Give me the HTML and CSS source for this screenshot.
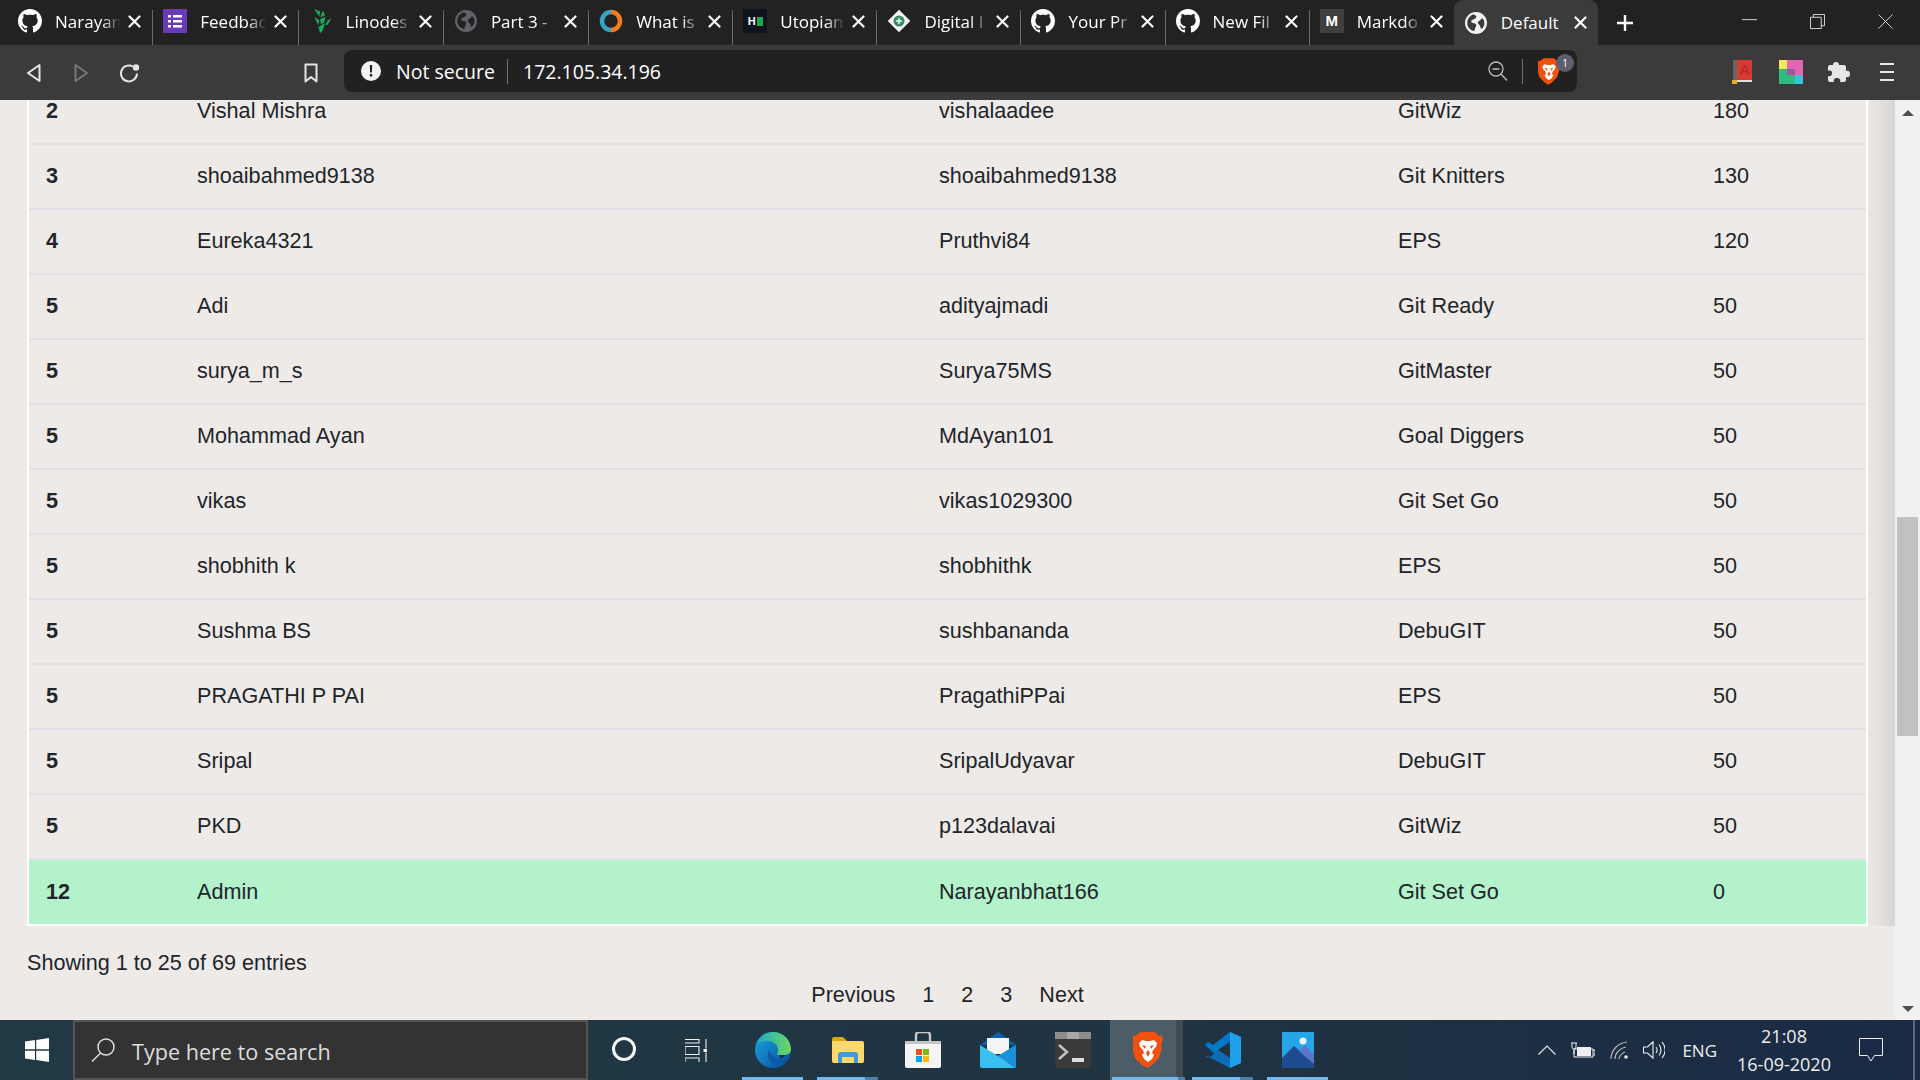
FILE: index.html
```html
<!DOCTYPE html>
<html lang="en">
<head>
<meta charset="utf-8">
<title>Default</title>
<link rel="stylesheet" href="styles.css">
</head>
<body>
<svg class="sprite" aria-hidden="true">
  <symbol id="gh" viewBox="0 0 16 16"><path fill="#fff" d="M8 0C3.58 0 0 3.58 0 8c0 3.54 2.29 6.53 5.47 7.59.4.07.55-.17.55-.38 0-.19-.01-.82-.01-1.49-2.01.37-2.53-.49-2.69-.94-.09-.23-.48-.94-.82-1.13-.28-.15-.68-.52-.01-.53.63-.01 1.08.58 1.23.82.72 1.21 1.87.87 2.33.66.07-.52.28-.87.51-1.07-1.78-.2-3.64-.89-3.64-3.95 0-.87.31-1.59.82-2.15-.08-.2-.36-1.02.08-2.12 0 0 .67-.21 2.2.82.64-.18 1.32-.27 2-.27.68 0 1.36.09 2 .27 1.53-1.04 2.2-.82 2.2-.82.44 1.1.16 1.92.08 2.12.51.56.82 1.27.82 2.15 0 3.07-1.87 3.75-3.65 3.95.29.25.54.73.54 1.48 0 1.07-.01 1.93-.01 2.2 0 .21.15.46.55.38A8.013 8.013 0 0016 8c0-4.42-3.58-8-8-8z"/></symbol>
  <symbol id="globe" viewBox="0 0 24 24"><path fill="currentColor" fill-rule="evenodd" d="M12 1a11 11 0 1 0 0 22 11 11 0 0 0 0-22zM9 3.500c2 .3 3 .9 3.400 2 .3 1-1 1.800-2.200 2.400-1.400.7-3 1-3 2.600 0 1.300 1.500 1.500 2.800 1.700 1.500.3 2.300 1.100 2.200 2.400-.1 1.500-1.300 2.300-1.500 3.800-.1.9-.3 1.600-.9 1.700C6 19 3.300 15.800 3.300 12c0-3.800 2.400-7.100 5.700-8.500zm8.600 4c.7-.3 1.400.1 1.900 1 .6 1.100.9 2.300.9 3.500 0 2-.7 3.800-1.900 5.300-.6.600-1.300.6-1.700-.1-.6-1-.3-2-1-3-.6-.9-1.900-1.200-1.900-2.500 0-1.200 1.100-1.600 2-2.200.8-.6.900-1.600 1.700-2z"/></symbol>
  <symbol id="x" viewBox="0 0 13 13"><path d="M1.500 1.500l10 10M11.500 1.500l-10 10" fill="none" stroke="#fff" stroke-width="2.200" stroke-linecap="round"/></symbol>
  <symbol id="brave" viewBox="0 0 30 36"><path fill="#f1500f" d="M8 0h14l4 4 3-1 1 5-2 4 1 4-3 10-7 7-5 3-5-3-7-7-3-10 1-4-2-4 1-5 3 1z"/><path fill="#fff" d="M6 11l3-3 4 1h4l4-1 3 3-1 4-3 3-1 3 2 2-2 4-4 3-4-3-2-4 2-2-1-3-3-3z"/><path fill="#f1500f" d="M9 13l4 1-1 3zM21 13l-4 1 1 3zM15 18v7l-2-4zM15 18v7l2-4z"/></symbol>
</svg>

<div class="screen">
  <header class="tabstrip">
    <div class="tab"><svg class="fav"><use href="#gh"/></svg><span class="title">Narayan</span><svg class="close"><use href="#x"/></svg></div>
    <div class="tab"><svg class="fav" viewBox="0 0 24 24"><rect x="0" y="0" width="24" height="24" rx="1" fill="#673ab7"/><path fill="#fff" d="M5 6h3v2.500H5zM10 6h9v2.500h-9zM5 11h3v2.500H5zM10 11h9v2.500h-9zM5 16h3v2.500H5zM10 16h9v2.500h-9z"/></svg><span class="title">Feedbac</span><svg class="close"><use href="#x"/></svg></div>
    <div class="tab"><svg class="fav" viewBox="0 0 24 28"><path fill="#1fa95c" d="M4 0l7 3-1 6zM14 2l3 5-6 3zM4 9l6 4-1 6zM11 12l6-3-1 6-4 3zM9 21l8-5-3 9-3 3zM20 13l4-2-4 7-3 1z"/></svg><span class="title">Linodes</span><svg class="close"><use href="#x"/></svg></div>
    <div class="tab"><svg class="fav globe-dim"><use href="#globe"/></svg><span class="title">Part 3 -</span><svg class="close"><use href="#x"/></svg></div>
    <div class="tab"><svg class="fav" viewBox="0 0 24 24"><path d="M12 3a9 9 0 0 1 0 18" fill="none" stroke="#f47b20" stroke-width="4.500"/><path d="M12 21a9 9 0 0 1 0-18" fill="none" stroke="#36a3c4" stroke-width="4.500"/></svg><span class="title">What is</span><svg class="close"><use href="#x"/></svg></div>
    <div class="tab"><div class="fav fav-hn"><span class="fav-hn-h">H</span><span class="fav-hn-bar"></span></div><span class="title">Utopian</span><svg class="close"><use href="#x"/></svg></div>
    <div class="tab"><svg class="fav" viewBox="0 0 24 24"><rect x="3.500" y="3.500" width="17" height="17" transform="rotate(45 12 12)" fill="#f2f2f2" stroke="#222" stroke-width="1"/><circle cx="12" cy="12" r="5.500" fill="#3d8a68"/><path d="M9 12h6M12 9v6" stroke="#dfe" stroke-width="1.500"/></svg><span class="title">Digital I</span><svg class="close"><use href="#x"/></svg></div>
    <div class="tab"><svg class="fav"><use href="#gh"/></svg><span class="title">Your Pr</span><svg class="close"><use href="#x"/></svg></div>
    <div class="tab"><svg class="fav"><use href="#gh"/></svg><span class="title">New Fil</span><svg class="close"><use href="#x"/></svg></div>
    <div class="tab"><div class="fav fav-m">M</div><span class="title">Markdo</span><svg class="close"><use href="#x"/></svg></div>
    <div class="tab tab-active"><svg class="fav globe-bright"><use href="#globe"/></svg><span class="title">Default</span><svg class="close"><use href="#x"/></svg></div>
    <svg class="newtab" viewBox="0 0 18 18"><path d="M9 1v16M1 9h16" stroke="#fff" stroke-width="2.400" fill="none"/></svg>
    <div class="winctl">
      <svg class="win-min" viewBox="0 0 16 16"><path d="M0 6h16" stroke="#ddd" fill="none"/></svg>
      <svg class="win-res" viewBox="0 0 16 16"><path d="M.5 3.500h11.500v12H.5zM3.500 3.500V.5h12v12H12" stroke="#ddd" fill="none"/></svg>
      <svg class="win-cls" viewBox="0 0 16 16"><path d="M.5.5l15 15M15.500.5l-15 15" stroke="#ddd" fill="none"/></svg>
    </div>
  </header>

  <nav class="toolbar">
    <svg class="tb-back" viewBox="0 0 15 20"><path d="M13.500 2v16L2 10z" fill="none" stroke="#e6e6e6" stroke-width="2" stroke-linejoin="round"/></svg>
    <svg class="tb-fwd" viewBox="0 0 15 20"><path d="M1.500 2v16L13 10z" fill="none" stroke="#777" stroke-width="2" stroke-linejoin="round"/></svg>
    <svg class="tb-reload" viewBox="0 0 21 20"><path d="M14 3.500a8 8 0 1 0 4 7" fill="none" stroke="#e6e6e6" stroke-width="2"/><circle cx="17" cy="4.500" r="3.200" fill="#e6e6e6"/></svg>
    <svg class="tb-mark" viewBox="0 0 14 20"><path d="M1.500 1.500h11v17L7 14l-5.500 4.500z" fill="none" stroke="#e6e6e6" stroke-width="2" stroke-linejoin="round"/></svg>
    <div class="omni">
      <svg class="omni-info" viewBox="0 0 20 20"><circle cx="10" cy="10" r="10" fill="#f2f2f2"/><path d="M8.800 4h2.400l-.3 7.500H9.100zM8.800 13h2.400v2.500H8.800z" fill="#222"/></svg>
      <span class="omni-sec">Not secure</span>
      <span class="omni-url">172.105.34.196</span>
      <svg class="omni-zoom" viewBox="0 0 20 20"><circle cx="8" cy="8" r="7" fill="none" stroke="#bbb" stroke-width="1.300"/><path d="M13 13l6 6.500M4.500 8h7" stroke="#bbb" stroke-width="1.300" fill="none"/></svg>
      <span class="omni-shield"><svg class="omni-lion"><use href="#brave"/></svg><span class="badge">1</span></span>
    </div>
    <svg class="ext-book" viewBox="0 0 21 24"><rect x="1" y="0" width="4" height="22" fill="#666"/><rect x="5" y="0" width="15" height="20" fill="#d63b33"/><rect x="5" y="20" width="15" height="2" fill="#ddd"/><rect x="0" y="20" width="5" height="4" fill="#e8b020"/><text x="12.500" y="15" font-size="15" font-family="Liberation Sans" fill="#a82a26" text-anchor="middle">A</text></svg>
    <svg class="ext-blocks" viewBox="0 0 24 24"><rect width="24" height="24" fill="#2dbd7f"/><rect width="8" height="9" fill="#f4e85c"/><rect x="8" width="16" height="15" fill="#e266b3"/><rect x="16" y="15" width="8" height="9" fill="#2cc8dc"/><rect x="8" y="9" width="8" height="6" fill="#a0559c"/></svg>
    <svg class="ext-puzzle" viewBox="0 0 22 22"><path fill="#e6e6e6" d="M8 1c2 0 3 1 3 3h5a2 2 0 0 1 2 2v4c3-1 4 1 4 3s-1 4-4 3v3a2 2 0 0 1-2 2h-4c1-3-1-4-3-4s-4 1-3 4H2a2 2 0 0 1-2-2v-4c3 1 4-1 4-3S3 9 0 10V6a2 2 0 0 1 2-2h3c0-2 1-3 3-3z"/></svg>
    <svg class="ext-menu" viewBox="0 0 14 18"><path d="M0 1h14M0 9h14M0 17h14" stroke="#e6e6e6" stroke-width="2" fill="none"/></svg>
  </nav>

  <div class="viewport">
    <main class="page">
      <div class="table-row">
        <table class="board">
          <colgroup>
            <col class="c1"><col class="c2"><col class="c3"><col class="c4"><col class="c5">
          </colgroup>
          <tbody>
            <tr><th>2</th><td>Vishal Mishra</td><td>vishalaadee</td><td>GitWiz</td><td>180</td></tr>
            <tr><th>3</th><td>shoaibahmed9138</td><td>shoaibahmed9138</td><td>Git Knitters</td><td>130</td></tr>
            <tr><th>4</th><td>Eureka4321</td><td>Pruthvi84</td><td>EPS</td><td>120</td></tr>
            <tr><th>5</th><td>Adi</td><td>adityajmadi</td><td>Git Ready</td><td>50</td></tr>
            <tr><th>5</th><td>surya_m_s</td><td>Surya75MS</td><td>GitMaster</td><td>50</td></tr>
            <tr><th>5</th><td>Mohammad Ayan</td><td>MdAyan101</td><td>Goal Diggers</td><td>50</td></tr>
            <tr><th>5</th><td>vikas</td><td>vikas1029300</td><td>Git Set Go</td><td>50</td></tr>
            <tr><th>5</th><td>shobhith k</td><td>shobhithk</td><td>EPS</td><td>50</td></tr>
            <tr><th>5</th><td>Sushma BS</td><td>sushbananda</td><td>DebuGIT</td><td>50</td></tr>
            <tr><th>5</th><td>PRAGATHI P PAI</td><td>PragathiPPai</td><td>EPS</td><td>50</td></tr>
            <tr><th>5</th><td>Sripal</td><td>SripalUdyavar</td><td>DebuGIT</td><td>50</td></tr>
            <tr><th>5</th><td>PKD</td><td>p123dalavai</td><td>GitWiz</td><td>50</td></tr>
            <tr class="me"><th>12</th><td>Admin</td><td>Narayanbhat166</td><td>Git Set Go</td><td>0</td></tr>
          </tbody>
        </table>
        <div class="gutter"></div>
      </div>
      <p class="info">Showing 1 to 25 of 69 entries</p>
      <div class="pager"><span>Previous</span><span>1</span><span>2</span><span>3</span><span>Next</span></div>
    </main>
    <div class="scrollbar">
      <span class="arrow-up"></span>
      <span class="thumb"></span>
      <span class="arrow-down"></span>
    </div>
  </div>

  <footer class="taskbar">
    <div class="start">
      <svg class="winlogo" viewBox="0 0 24 24"><path fill="#fff" d="M0 3.500l10-1.400v9.200H0zM11.200 1.900L24 0v11.300H11.200zM0 12.700h10v9.200L0 20.500zM11.200 12.700H24V24l-12.800-1.900z"/></svg>
    </div>
    <div class="search">
      <svg class="search-ico" viewBox="0 0 24 24"><circle cx="15" cy="9" r="8" fill="none" stroke="#ddd" stroke-width="1.500"/><path d="M9.500 15L1 23.500" stroke="#ddd" stroke-width="1.500"/></svg>
      <span class="search-text">Type here to search</span>
    </div>
    <div class="slot slot-cortana"><span class="cortana"></span></div>
    <div class="slot">
      <svg class="ic-view" viewBox="0 0 22 23"><path d="M0 .5h14V4H0M0 7.500h14v8H0zM0 23v-4h14v4M21 0v9.500M21 13.500V23" fill="none" stroke="#f0f0f0" stroke-width="1.100"/><rect x="18.500" y="10" width="4" height="3" fill="#f0f0f0"/></svg>
    </div>
    <div class="slot on">
      <svg class="ic-36" viewBox="0 0 36 36"><defs><linearGradient id="e1" x1="0" y1="0" x2="1" y2="1"><stop offset="0" stop-color="#1ba7e0"/><stop offset="1" stop-color="#0a4a98"/></linearGradient><linearGradient id="e2" x1="0" y1="0" x2="1" y2="0"><stop offset="0" stop-color="#18a8c8"/><stop offset="1" stop-color="#6fd860"/></linearGradient></defs><circle cx="18" cy="18" r="18" fill="url(#e1)"/><path d="M1 12C4 4 11 0 18 0c10 0 18 8 18 17 0 4-3 6-8 6h-5c-2 0 0-2 0-5 0-5-4-9-10-9-5 0-9 1-12 3z" fill="url(#e2)"/><path d="M14 18c-3 5 0 13 8 16 4-1 8-4 11-8-4 1-10 2-14-1-3-2-4-5-5-7z" fill="#0c5aa6"/><path d="M24 23h7l-5 4z" fill="#1f3441"/></svg>
    </div>
    <div class="slot on split">
      <svg class="ic-folder" viewBox="0 0 32 26"><path d="M0 2a2 2 0 0 1 2-2h9l4 4H0z" fill="#e0a511"/><path d="M0 4h30a2 2 0 0 1 2 2v18a2 2 0 0 1-2 2H2a2 2 0 0 1-2-2z" fill="#fcd968"/><path d="M6 26v-8a3 3 0 0 1 3-3h14a3 3 0 0 1 3 3v8h-4v-6H10v6z" fill="#3f9ae0"/></svg>
    </div>
    <div class="slot">
      <svg class="ic-36" viewBox="0 0 36 36"><path d="M11 10V3a3 3 0 0 1 3-3h8a3 3 0 0 1 3 3v7" fill="none" stroke="#c9c9c9" stroke-width="2.400"/><path d="M0 9h36v25a2 2 0 0 1-2 2H2a2 2 0 0 1-2-2z" fill="#f5f5f5"/><rect y="9" width="36" height="3" fill="#c4c4c4"/><rect x="11" y="17" width="6" height="6" fill="#f25022"/><rect x="18" y="17" width="6" height="6" fill="#7fba00"/><rect x="11" y="24" width="6" height="6" fill="#00a4ef"/><rect x="18" y="24" width="6" height="6" fill="#ffb900"/></svg>
    </div>
    <div class="slot">
      <svg class="ic-36" viewBox="0 0 36 36"><path d="M18 0L36 13H0z" fill="#0a5fb4"/><path d="M7 6h22v16H7z" fill="#f4f4f4"/><path d="M0 13l18 11 18-11v21a2 2 0 0 1-2 2H2a2 2 0 0 1-2-2z" fill="#38c0f0"/><path d="M18 24l18-11v21a2 2 0 0 1-1 2z" fill="#1a90dc"/></svg>
    </div>
    <div class="slot">
      <svg class="ic-36" viewBox="0 0 36 36"><rect y="0" width="36" height="36" rx="2" fill="#3a3a3a"/><rect width="36" height="7" fill="#8d8d8d"/><rect x="12" width="12" height="7" fill="#a8a8a8"/><path d="M4 13l8 7-8 7" fill="none" stroke="#c4c4c4" stroke-width="2.400"/><rect x="17" y="26" width="12" height="4" fill="#ddd"/></svg>
    </div>
    <div class="slot on split active">
      <svg class="ic-brave"><use href="#brave"/></svg>
    </div>
    <div class="slot on split">
      <svg class="ic-36" viewBox="0 0 36 36"><path d="M25 0l11 5v26l-11 5L0 13l3-3 5 3z" fill="#0078c8"/><path d="M25 0l11 5v26l-11 5z" fill="#1fa0ec"/><path d="M25 36L0 23l3 3 6-4 16-14z" fill="#0b6cb8"/><path d="M25 10L13 18l12 8z" fill="#1f3441"/></svg>
    </div>
    <div class="slot on">
      <svg class="ic-photo" viewBox="0 0 32 36"><rect width="32" height="36" rx="1" fill="#26a6e8"/><circle cx="21" cy="9" r="3.500" fill="#e8f4fc"/><path d="M0 26l12-12 20 18v4H0z" fill="#1d4a90"/><path d="M17 19l6-6 9 10v9z" fill="#5b75c8"/></svg>
    </div>

    <div class="tray">
      <svg class="tr-chev" viewBox="0 0 18 10"><path d="M.5 9.500L9 1l8.500 8.500" fill="none" stroke="#e8e8e8" stroke-width="1.200"/></svg>
      <svg class="tr-batt" viewBox="0 0 24 16"><path d="M3 7h19v8H3z" fill="none" stroke="#eee"/><rect x="6" y="5" width="14" height="9" fill="#eee"/><path d="M22 8h2v5h-2M1 1v4a2 2 0 0 0 4 0V1M3 8v4M0 1h6" fill="none" stroke="#eee"/></svg>
      <svg class="tr-wifi" viewBox="0 0 18 18"><path d="M1 18C1 9 8 2 17 1M5 18c0-6 5-11 11-12M9 18c0-3 3-6 6-7" fill="none" stroke="#bbb" stroke-width="1.100"/><circle cx="16" cy="16" r="1.800" fill="#eee"/></svg>
      <svg class="tr-vol" viewBox="0 0 22 18"><path d="M.5 6h4L10 .8v16.400L4.500 12h-4zM13 6c1.500 2 1.500 4 0 6M16 3.500c2.500 3.500 2.500 7.500 0 11M19 1c4 5 4 11 0 16" fill="none" stroke="#eee" stroke-width="1.100"/></svg>
      <span class="tr-lang">ENG</span>
      <div class="clock"><span>21:08</span><span>16-09-2020</span></div>
      <svg class="tr-note" viewBox="0 0 24 24"><path d="M.5.500h23v17h-8L12 23l-3.500-5.500h-8z" fill="none" stroke="#eee"/></svg>
      <span class="tr-desk"></span>
    </div>
  </footer>
</div>
</body>
</html>
```

FILE: styles.css
```css
* { box-sizing: border-box; }
html, body { margin: 0; padding: 0; height: 100%; overflow: hidden; }
.sprite { width: 0; height: 0; position: absolute; }
.screen { width: 1920px; height: 1080px; display: flex; flex-direction: column; font-family: "Open Sans", "Noto Sans", sans-serif; }

/* tabs */
.tabstrip { height: 45px; flex: none; background: #222; display: flex; align-items: stretch; padding-left: 8px; }
.tab { flex: 0 0 144.1px; min-width: 0; display: flex; align-items: center; padding: 0 11px 0 10px; color: #fff; border-right: 1px solid #6a6a6a; margin-top: 10px; height: 35px; }
.tab:nth-child(-n+4) { flex-basis: 145.3px; }
.tab .fav, .tab .title, .tab .close { margin-top: -13px; }
.tab:nth-child(10) { border-right: none; }
.tab-active { background: #3b3b3b; border-right: none; border-radius: 9px 9px 0 0; margin-top: 0; height: 45px; }
.tab-active .fav, .tab-active .title, .tab-active .close { margin-top: 0; }
.fav { width: 24px; height: 24px; flex: none; }
.globe-dim { color: #5f6368; }
.globe-bright { color: #f2f2f2; }
.title { flex: 1; min-width: 0; margin: 0 6px 0 13px; font-size: 17px; white-space: nowrap; overflow: hidden; -webkit-mask-image: linear-gradient(90deg, #000 70%, transparent 98%); mask-image: linear-gradient(90deg, #000 70%, transparent 98%); }
.tab-active .title { -webkit-mask-image: none; mask-image: none; }
.close { width: 13px; height: 13px; flex: none; }
.fav-m { background: #3f3f3f; color: #fff; font: bold 15px/24px "Liberation Sans", sans-serif; text-align: center; }
.fav-hn { background: #0e141e; display: flex; align-items: center; justify-content: center; gap: 1px; }
.fav-hn-h { color: #fff; font: bold 11px/12px "Liberation Sans", sans-serif; }
.fav-hn-bar { width: 6px; height: 9px; background: #1ba94c; }
.newtab { width: 18px; height: 18px; margin: 14px 0 0 18px; flex: none; }
.winctl { margin-left: auto; display: flex; align-items: flex-start; padding: 14px 27px 0 0; gap: 53px; }
.winctl svg { width: 15px; height: 15px; flex: none; }

/* toolbar */
.toolbar { height: 55px; flex: none; background: #3b3b3b; display: flex; align-items: center; padding-left: 26px; }
.tb-back { width: 15px; height: 20px; }
.tb-fwd { width: 15px; height: 20px; margin-left: 33px; }
.tb-reload { width: 21px; height: 20px; margin-left: 30px; }
.tb-mark { width: 14px; height: 20px; margin-left: 164px; }
.omni { width: 1233px; height: 42px; margin: -3px 0 0 26px; background: #212121; border-radius: 8px; display: flex; align-items: center; color: #fff; padding-left: 17px; }
.omni-info { width: 20px; height: 20px; flex: none; }
.omni-sec { margin-left: 15px; width: 112px; height: 25px; font-size: 19.5px; line-height: 25px; border-right: 1px solid #6f6f6f; white-space: nowrap; }
.omni-url { margin-left: 15px; font-size: 19.5px; }
.omni-zoom { width: 20px; height: 20px; margin-left: auto; }
.omni-shield { width: 55px; height: 25px; margin-left: 14px; border-left: 1px solid #6f6f6f; position: relative; display: flex; align-items: center; padding-left: 15px; }
.omni-lion { width: 22px; height: 27px; flex: none; }
.badge { position: absolute; left: 33px; top: -5px; width: 18px; height: 18px; border-radius: 50%; background: #5c5f70; color: #fff; font-size: 10px; line-height: 18px; text-align: center; }
.ext-book { width: 21px; height: 24px; margin: -2px 0 0 155px; }
.ext-blocks { width: 24px; height: 24px; margin: -2px 0 0 26px; }
.ext-puzzle { width: 22px; height: 22px; margin: -2px 0 0 25px; }
.ext-menu { width: 14px; height: 18px; margin: -2px 0 0 30px; }

/* page */
.viewport { flex: 1; min-height: 0; display: flex; overflow: hidden; background: #eeeae7; }
.page { flex: 1; min-width: 0; padding-left: 27px; margin-top: -20px; color: #212529; font: 21.6px/30px "Liberation Sans", Arial, sans-serif; }
.table-row { display: flex; }
.board { width: 1841px; flex: none; border-collapse: separate; border-spacing: 0; table-layout: fixed; border: solid #fff; border-width: 0 2px 2px; background: #eeeae7; }
.gutter { flex: 1; background: linear-gradient(90deg, #ebe7e4, #dad6d3); }
.c1 { width: 151px; } .c2 { width: 742px; } .c3 { width: 459px; } .c4 { width: 315px; } .c5 { width: 170px; }
.board th, .board td { height: 65px; padding: 0 17px 2px; text-align: left; border-bottom: 2px solid #e2e2e6; }
.board th { font-weight: 700; }
.me th, .me td { background: #b3f2cb; border-bottom: none; height: 64px; padding: 0 17px; }
.info { margin: 22px 0 0; }
.pager { display: flex; justify-content: center; gap: 27px; margin-top: 2px; padding-right: 27px; }

/* scrollbar */
.scrollbar { width: 25px; flex: none; background: #f1f1f1; position: relative; display: flex; flex-direction: column; align-items: center; justify-content: space-between; padding: 10px 0 8px; }
.arrow-up, .arrow-down { width: 0; height: 0; border-left: 6px solid transparent; border-right: 6px solid transparent; }
.arrow-up { border-bottom: 6px solid #505050; }
.arrow-down { border-top: 6px solid #505050; }
.thumb { position: absolute; left: 2px; top: 417px; width: 21px; height: 219px; background: #c1c1c1; }

/* taskbar */
.taskbar { height: 60px; flex: none; display: flex; align-items: stretch; background: linear-gradient(90deg, #203945 0, #1f3442 60%, #1a2a45 100%); }
.start { width: 73px; flex: none; display: flex; align-items: center; justify-content: center; }
.winlogo { width: 24px; height: 24px; }
.search { width: 515px; flex: none; background: #333; border: 2px solid #555; display: flex; align-items: center; padding-left: 16px; }
.search-ico { width: 24px; height: 24px; flex: none; }
.search-text { margin: 2px 0 0 17px; color: #ddd; font-size: 21.6px; white-space: nowrap; }
.slot { width: 75px; flex: none; display: flex; align-items: center; justify-content: center; position: relative; }
.slot-cortana { width: 72px; padding-bottom: 2px; }
.cortana { width: 24px; height: 24px; border: 3px solid #f4f4f4; border-radius: 50%; }
.slot.on::after { content: ""; position: absolute; left: 7px; right: 7px; bottom: 0; height: 3px; background: #76b9ed; }
.slot.split::before { content: ""; position: absolute; right: 7px; bottom: 0; width: 13px; height: 3px; background: #4d7fa8; z-index: 1; }
.slot.active { background: linear-gradient(90deg, #4d5d68 0, #4d5d68 66px, #3f4a54 66px, #3f4a54 73px, transparent 73px); }
.slot.active::after { left: 2px; right: 0; }
.slot.active::before { right: 0; width: 7px; }
.ic-view { width: 22px; height: 23px; margin-left: -3px; }
.ic-36 { width: 36px; height: 36px; }
.ic-folder { width: 32px; height: 26px; }
.ic-brave { width: 30px; height: 36px; }
.ic-photo { width: 32px; height: 36px; }
.tray { margin-left: auto; display: flex; align-items: center; gap: 15px; color: #eee; padding-right: 5px; }
.tr-chev { width: 18px; height: 10px; }
.tr-batt { width: 24px; height: 16px; }
.tr-wifi { width: 18px; height: 18px; }
.tr-vol { width: 22px; height: 18px; }
.tr-lang { font-size: 17px; margin-left: 2px; }
.clock { width: 94px; margin-left: 5px; display: flex; flex-direction: column; align-items: center; font-size: 18px; line-height: 28px; }
.tr-note { width: 24px; height: 24px; margin-left: 13px; }
.tr-desk { width: 2px; height: 60px; background: #5a6a80; margin-left: 15px; }
```
